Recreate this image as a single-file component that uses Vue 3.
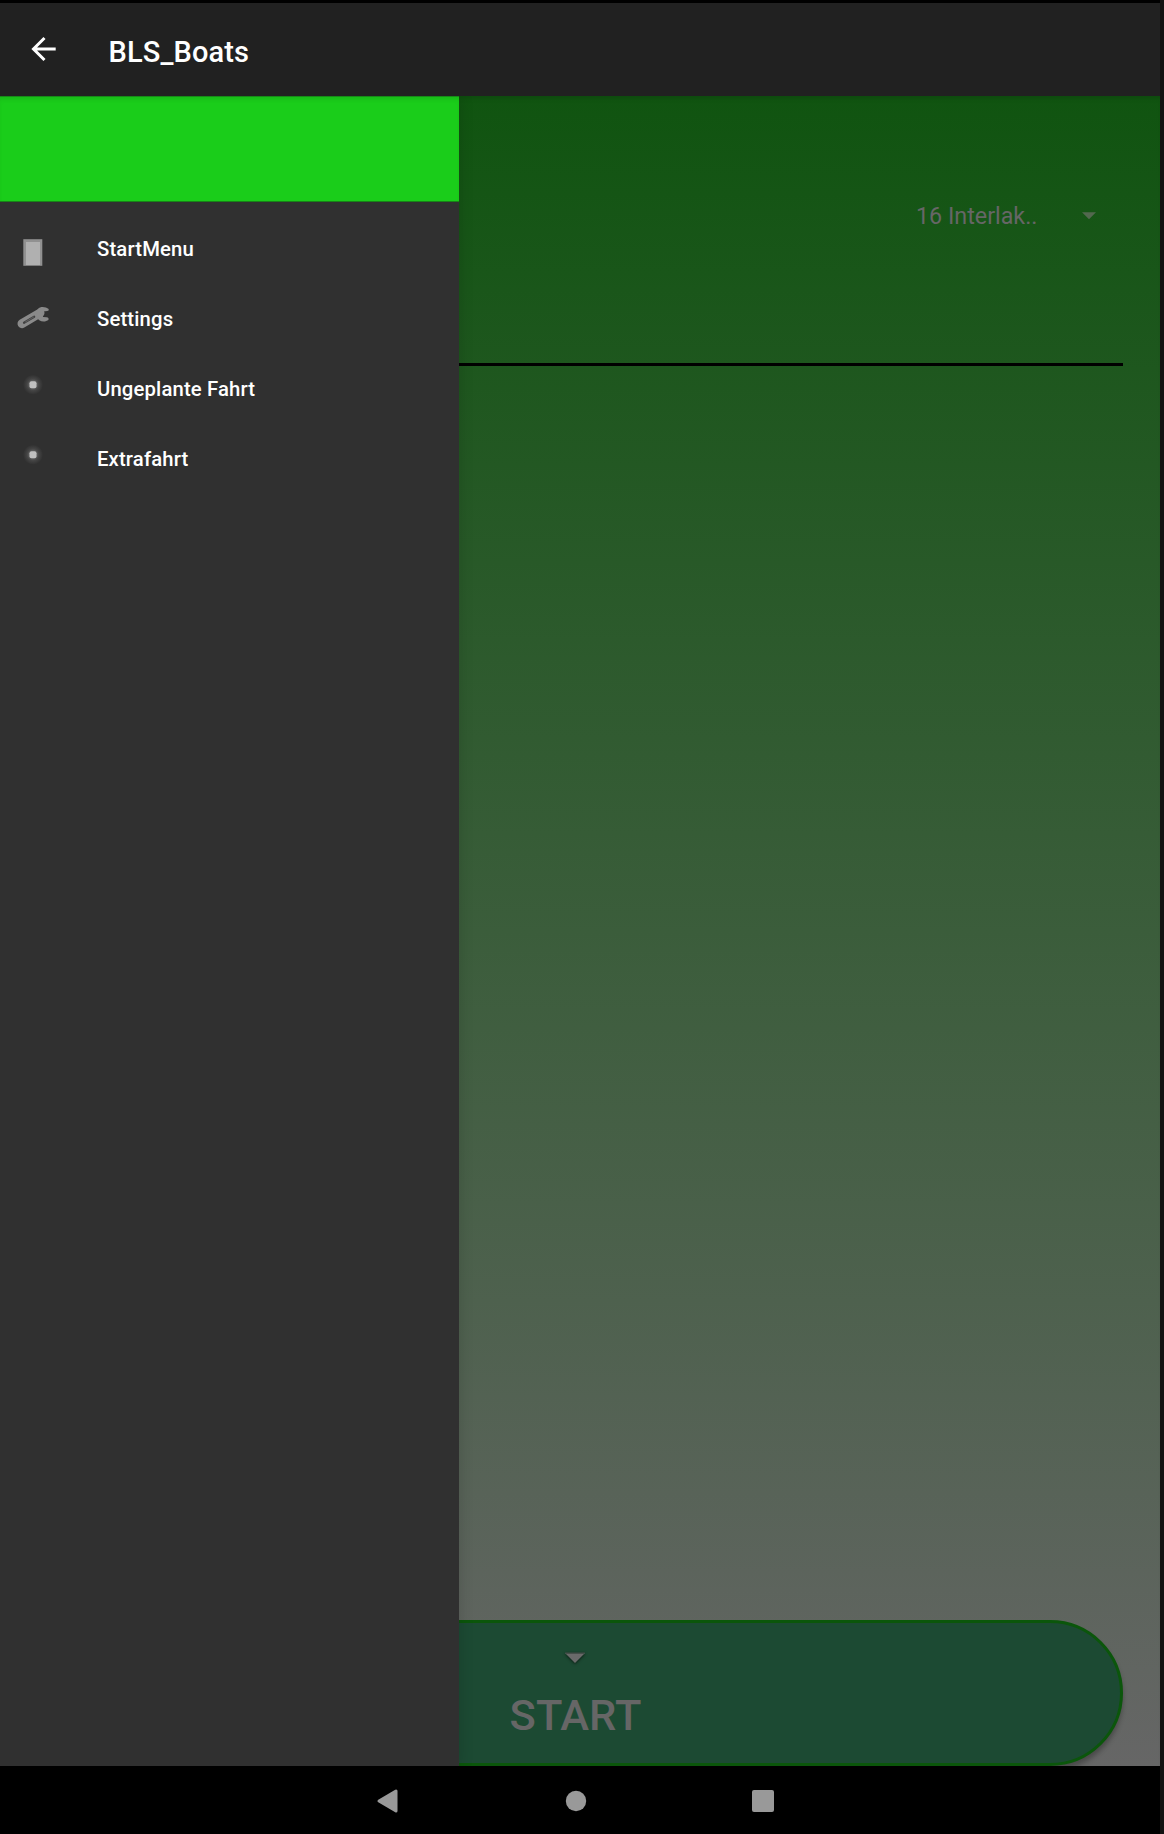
<script setup>
const items = [
  { label: 'StartMenu', icon: 'page' },
  { label: 'Settings', icon: 'wrench' },
  { label: 'Ungeplante Fahrt', icon: 'dot' },
  { label: 'Extrafahrt', icon: 'dot' },
]
</script>

<template>
  <div class="frame">
    <div class="device">
      <header class="appbar">
        <svg class="back" width="26" height="26" viewBox="0 0 26 26">
          <path d="M24.7 13H3M13.5 2L2.5 13L13.5 24" fill="none" stroke="#fff" stroke-width="3" />
        </svg>
        <h1 class="title">BLS_Boats</h1>
      </header>

      <div class="body">
        <main class="page">
          <div class="picker">
            <span class="picker-text">16 Interlak..</span>
            <svg width="14" height="8" viewBox="0 0 14 8"><path d="M0 0.3H14L7 7.3Z" fill="#53684f" /></svg>
          </div>
          <div class="rule"></div>
          <button class="start">
            <svg class="start-arrow" width="26" height="18" viewBox="0 0 26 18">
              <path d="M3 4H23L13 14Z" fill="#6a6a6a" />
              <path d="M3 3.5H23L22 5H4Z" fill="#474f4b" />
            </svg>
            <span class="start-text">START</span>
          </button>
        </main>

        <nav class="drawer">
          <div class="banner"></div>
          <ul class="menu">
            <li v-for="item in items" :key="item.label" class="row">
              <svg class="icon" width="42" height="42" viewBox="0 0 42 42">
                <g v-if="item.icon === 'page'">
                  <rect x="11.3" y="11.2" width="19" height="26.6" fill="#919191" />
                  <rect x="14" y="14" width="14" height="23" fill="#b0b0b0" />
                </g>
                <g v-else-if="item.icon === 'wrench'" transform="translate(0 0.7)">
                  <path d="M10 25L28 14.3" stroke="#8a8a8a" stroke-width="9" stroke-linecap="round" />
                  <path d="M36.7 10.3C34 8.3 28.5 7.3 26 10.3C23.6 13.7 24.2 19.3 27.3 21.5C30.1 23.3 34.2 22.9 36.4 21.2Q37.2 18.8 34.6 18.5L31.2 18.2Q29.5 15.2 31.3 12.7L35.3 12.4Q37.3 12.3 36.7 10.3Z" fill="#8a8a8a" />
                  <path d="M12 24.1L22.2 18" stroke="#404040" stroke-width="2.2" stroke-linecap="round" />
                  <path d="M13.2 23.4L22 18.1" stroke="#656565" stroke-width="0.9" />
                </g>
                <g v-else>
                  <circle cx="21" cy="16.7" r="10" fill="url(#glow)" />
                  <rect x="17.5" y="13.2" width="7" height="7" rx="2" fill="#c0c0c0" />
                </g>
              </svg>
              <span class="label">{{ item.label }}</span>
            </li>
          </ul>
        </nav>
        <svg class="defs" width="0" height="0">
          <defs>
            <radialGradient id="glow">
              <stop offset="0.2" stop-color="#9a9a9a" stop-opacity="0.7" />
              <stop offset="0.6" stop-color="#808080" stop-opacity="0.25" />
              <stop offset="1" stop-color="#808080" stop-opacity="0" />
            </radialGradient>
          </defs>
        </svg>
      </div>

      <footer class="navbar">
        <svg width="24" height="26" viewBox="0 0 24 26"><path d="M3 13L20 3V23Z" fill="#999" stroke="#999" stroke-width="3" stroke-linejoin="round" /></svg>
        <svg width="22" height="22" viewBox="0 0 22 22"><circle cx="11" cy="11" r="10.2" fill="#999" /></svg>
        <svg width="22" height="22" viewBox="0 0 22 22"><rect width="22" height="22" rx="2" fill="#999" /></svg>
      </footer>
    </div>
  </div>
</template>

<style>
body {
  margin: 0;
}
</style>

<style scoped>
.frame {
  width: 1164px;
  height: 1834px;
  background: #121212;
  font-family: Roboto, sans-serif;
  overflow: hidden;
}
.device {
  width: 1160px;
  height: 1834px;
  display: flex;
  flex-direction: column;
  background: #000;
}
.appbar {
  height: 93px;
  margin-top: 3px;
  background: #212121;
  display: flex;
  align-items: center;
}
.back {
  margin: 0 0 1px 31px;
}
.title {
  margin: 4px 0 0 51.5px;
  font-size: 29px;
  line-height: 34px;
  font-weight: 500;
  letter-spacing: 0.13px;
  color: #fff;
}
.body {
  position: relative;
  height: 1670px;
  overflow: hidden;
}
.page {
  height: 100%;
  display: flex;
  flex-direction: column;
  background: linear-gradient(#105410, #666666);
  box-shadow: inset 0 5px 5px -3px rgba(0, 0, 0, 0.15);
}
.picker {
  height: 40px;
  margin-top: 100px;
  padding-left: 916px;
  display: flex;
  align-items: center;
  gap: 45px;
}
.picker-text {
  width: 121px;
  font-size: 23.3px;
  color: #666;
  white-space: nowrap;
}
.picker svg {
  margin-bottom: 1px;
}
.rule {
  height: 3px;
  margin: 127px 37px 0;
  background: #000;
}
.start {
  box-sizing: border-box;
  height: 146px;
  margin: auto 37px 0 27px;
  padding: 0;
  border: 3px solid #0b560b;
  border-radius: 73px;
  background: #1c4a33;
  box-shadow: 0 5px 5px rgba(0, 0, 0, 0.28);
  display: flex;
  flex-direction: column;
  align-items: center;
  font-family: inherit;
}
.start-arrow {
  margin-top: 26px;
  filter: drop-shadow(0 1px 1.5px rgba(0, 0, 0, 0.6));
}
.start-text {
  margin-top: 24px;
  margin-left: 1px;
  font-size: 43.4px;
  line-height: 50px;
  font-weight: 500;
  color: #666;
}
.drawer {
  position: absolute;
  top: 0;
  left: 0;
  width: 459px;
  height: 100%;
  background: #303030;
  box-shadow: 0 0 14px rgba(0, 0, 0, 0.16);
}
.banner {
  box-sizing: border-box;
  height: 106px;
  background: #1acd1a;
  border-bottom: 1px solid #178517;
  box-shadow: inset 0 1px 0 #188a18, inset 0 5px 5px -2px rgba(0, 0, 0, 0.1);
}
.menu {
  list-style: none;
  margin: 12px 0 0;
  padding: 0;
}
.row {
  height: 70px;
  display: flex;
  align-items: center;
}
.icon {
  margin-left: 12px;
}
.label {
  margin-left: 43px;
  font-size: 20.3px;
  line-height: 24px;
  letter-spacing: 0.15px;
  font-weight: 500;
  color: #fff;
}
.defs {
  position: absolute;
}
.navbar {
  height: 68px;
  padding-top: 2px;
  box-sizing: border-box;
  background: #000;
  display: flex;
  align-items: center;
}
.navbar svg:nth-child(1) {
  margin-left: 376px;
}
.navbar svg:nth-child(2) {
  margin-left: 165px;
}
.navbar svg:nth-child(3) {
  margin-left: 165px;
}
</style>
